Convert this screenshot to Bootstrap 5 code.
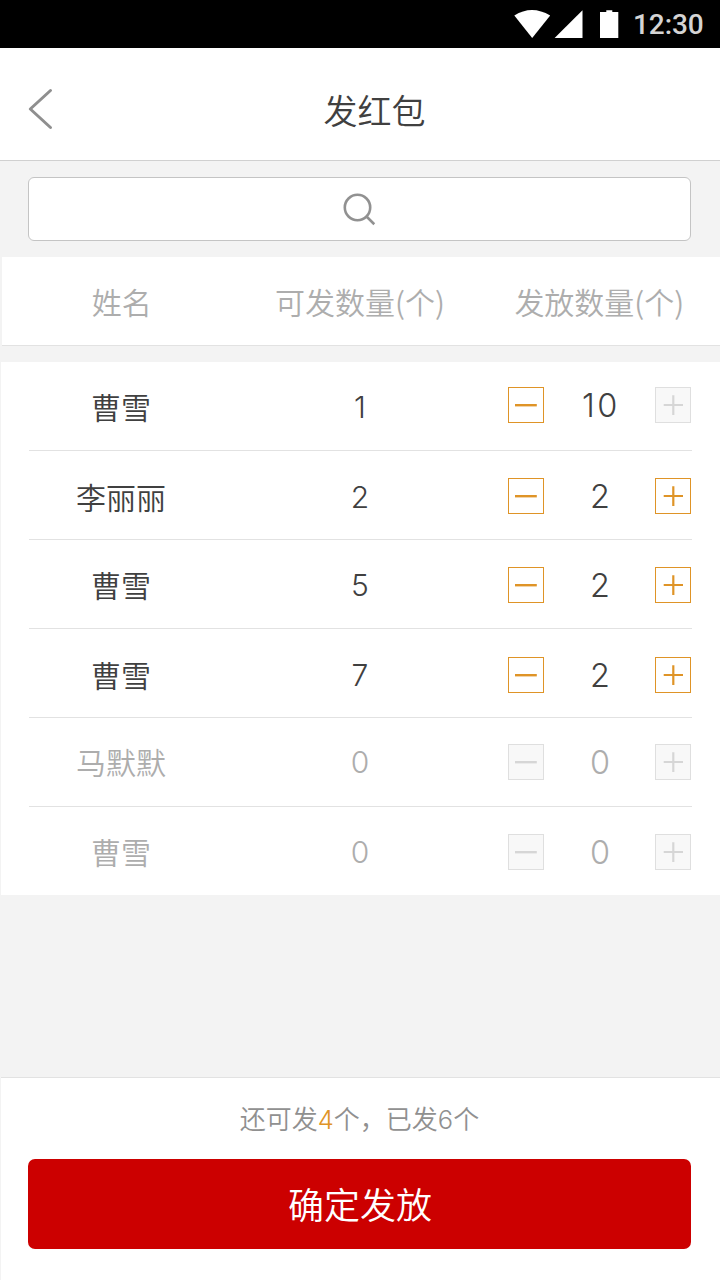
<!DOCTYPE html>
<html lang="zh-CN">
<head>
<meta charset="utf-8">
<meta name="viewport" content="width=device-width, initial-scale=1">
<title>发红包</title>
<link href="https://cdn.jsdelivr.net/npm/bootstrap@5.3.0/dist/css/bootstrap.min.css" rel="stylesheet">
<style>
  body { background: #f3f3f3; color: #404040; font-family: "Noto Sans CJK SC", sans-serif; font-weight: 350; line-height: 1; }
  .screen { width: 720px; height: 1280px; overflow: hidden; }
  .status-bar { height: 48px; background: #000; padding-right: 16px; }
  .clock { font: 500 28px/48px Roboto, sans-serif; color: #d4d4d4; width: 71px; margin-left: 13px; letter-spacing: -.1px; padding-top: 1px; }
  .title-bar { height: 113px; border-bottom: 1px solid #d0d0d0; padding: 0 28px; }
  .title-bar svg { margin-top: 9px; }
  .title-bar h1 { font-size: 34px; font-weight: 350; line-height: 40px; padding: 11px 0 0 31px; width: 610px; }
  .search-box { margin: 16px 29px 16px 28px; height: 64px; border: 1px solid #c4c4c4; border-radius: 6px; padding-right: 2px; }
  .heads { height: 89px; margin-left: 2px; border-bottom: 1px solid #e2e2e2; color: #adadad; font-size: 30px; }
  .heads > div { padding-right: 2px; }
  .people { margin: 16px 0 0 1px; height: 533px; padding: 0 28px; }
  .person { height: 89px; border-bottom: 1px solid #e2e2e2; }
  .person:last-child { border-bottom: 0; height: 88px; }
  .person > div { font-size: 30px; line-height: 36px; }
  .person .who { width: 184px; padding-top: var(--t); }
  .person .quota { width: 295px; padding: calc(var(--t) + 1px) 1px 0 0; font-family: Inter, sans-serif; font-size: 30px; font-weight: 300; }
  .person .stepper { width: 183px; padding-top: var(--s); font-family: Inter, sans-serif; font-size: 32.5px; font-weight: 300; }
  .stepper span { padding: 1px 0 0 1px; }
  .stepper .wide { letter-spacing: 2.5px; padding-left: 3px; }
  .spent { color: #adadad; }
  .step { width: 36px; height: 36px; padding: 0; border: 1px solid #df9427; border-radius: 0; background: #fff; color: #df9427; line-height: 1; }
  .step svg { display: block; margin: -1px; }
  .step:disabled { opacity: 1; border-color: #dfdfdf; background: #f8f8f8; color: #d6d6d6; }
  .foot { height: 203px; margin-left: 1px; border-top: 1px solid #e2e2e2; padding: 0 29px 31px 27px; }
  .summary { font-size: 26px; line-height: 40px; padding-top: 20px; height: 81px; color: #909090; }
  .summary span { font-family: Inter, sans-serif; font-weight: 300; font-size: 25.5px; }
  .summary .left-over { color: #df9427; }
  .confirm { height: 90px; background: #c00; color: #fff; border: 0; border-radius: 7px; font-size: 36px; font-weight: 350; line-height: 1; padding: 0 0 2px 1px; }
</style>
</head>
<body>
<svg class="d-none">
  <symbol id="minus" viewBox="0 0 36 36"><path d="M7 18.200H28.800" stroke="currentColor" stroke-width="2.400"/></symbol>
  <symbol id="plus" viewBox="0 0 36 36"><path d="M8.700 18H28M18.300 8.300V28" stroke="currentColor" stroke-width="2.200" fill="none"/></symbol>
</svg>
<div class="screen d-flex flex-column">
  <div class="status-bar d-flex align-items-center justify-content-end">
    <svg width="106" height="48" fill="#fff"><path d="M0.300 15.500Q17.700 4.500 36.200 15.500L18.200 38Z"/><path d="M40.600 38L68.500 10.300V38Z"/><path d="M86 12h6.300v-1.700h6v1.700h6v26H86Z"/></svg>
    <span class="clock">12:30</span>
  </div>
  <header class="title-bar bg-white d-flex align-items-center">
    <svg width="26" height="42" fill="none" stroke="#8f8f8f" stroke-width="3" stroke-linecap="round" stroke-linejoin="round"><path d="M22.500 2.500L2.300 21L22.500 39.500"/></svg>
    <h1 class="text-center mb-0">发红包</h1>
  </header>
  <div class="search-box bg-white d-flex align-items-center justify-content-center">
    <svg width="34" height="34" fill="none" stroke="#919191" stroke-width="2.600"><circle cx="15.500" cy="15.500" r="12.700"/><path d="M24.500 24.500L32.300 32.200"/></svg>
  </div>
  <div class="heads bg-white d-flex align-items-center text-center">
    <div class="col-4 pe-0">姓名</div><div class="col-4">可发数量(个)</div><div class="col-4">发放数量(个)</div>
  </div>
  <main class="people bg-white">
    <div class="person d-flex" style="--t:26px;--s:25px">
      <div class="who text-center">曹雪</div><div class="quota text-center">1</div>
      <div class="stepper d-flex justify-content-between"><button class="step btn"><svg width="36" height="36"><use href="#minus"/></svg></button><span class="wide">10</span><button class="step btn" disabled><svg width="36" height="36"><use href="#plus"/></svg></button></div>
    </div>
    <div class="person d-flex" style="--t:27px;--s:27px">
      <div class="who text-center">李丽丽</div><div class="quota text-center">2</div>
      <div class="stepper d-flex justify-content-between"><button class="step btn"><svg width="36" height="36"><use href="#minus"/></svg></button><span>2</span><button class="step btn"><svg width="36" height="36"><use href="#plus"/></svg></button></div>
    </div>
    <div class="person d-flex" style="--t:26px;--s:27px">
      <div class="who text-center">曹雪</div><div class="quota text-center">5</div>
      <div class="stepper d-flex justify-content-between"><button class="step btn"><svg width="36" height="36"><use href="#minus"/></svg></button><span>2</span><button class="step btn"><svg width="36" height="36"><use href="#plus"/></svg></button></div>
    </div>
    <div class="person d-flex" style="--t:27px;--s:28px">
      <div class="who text-center">曹雪</div><div class="quota text-center">7</div>
      <div class="stepper d-flex justify-content-between"><button class="step btn"><svg width="36" height="36"><use href="#minus"/></svg></button><span>2</span><button class="step btn"><svg width="36" height="36"><use href="#plus"/></svg></button></div>
    </div>
    <div class="person spent d-flex" style="--t:25px;--s:26px">
      <div class="who text-center">马默默</div><div class="quota text-center">0</div>
      <div class="stepper d-flex justify-content-between"><button class="step btn" disabled><svg width="36" height="36"><use href="#minus"/></svg></button><span>0</span><button class="step btn" disabled><svg width="36" height="36"><use href="#plus"/></svg></button></div>
    </div>
    <div class="person spent d-flex" style="--t:26px;--s:27px">
      <div class="who text-center">曹雪</div><div class="quota text-center">0</div>
      <div class="stepper d-flex justify-content-between"><button class="step btn" disabled><svg width="36" height="36"><use href="#minus"/></svg></button><span>0</span><button class="step btn" disabled><svg width="36" height="36"><use href="#plus"/></svg></button></div>
    </div>
  </main>
  <footer class="foot bg-white mt-auto">
    <div class="summary text-center">还可发<span class="left-over">4</span>个，已发<span>6</span>个</div>
    <button class="confirm btn w-100">确定发放</button>
  </footer>
</div>
<script src="https://cdn.jsdelivr.net/npm/bootstrap@5.3.0/dist/js/bootstrap.bundle.min.js"></script>
</body>
</html>
